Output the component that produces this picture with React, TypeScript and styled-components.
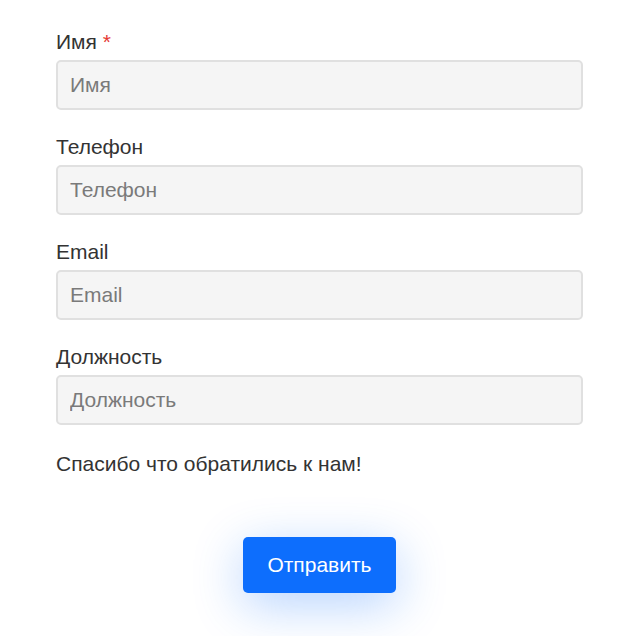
import React from "react";
import styled, { createGlobalStyle } from "styled-components";

const Global = createGlobalStyle`
    body {
        margin: 0;
        background: #ffffff;
        font-family: "Liberation Sans", Arial, sans-serif;
        color: #333333;
    }
`;

const Form = styled.form`
    width: 527px;
    margin: 0 auto;
    padding: 30px 0 50px;
    display: flex;
    flex-direction: column;
`;

const Field = styled.div`
    display: flex;
    flex-direction: column;
    margin-bottom: 25px;
`;

const Label = styled.label`
    font-size: 21px;
    line-height: 24px;
    margin-bottom: 6px;
    color: #333;
`;

const Star = styled.span`
    color: #e53935;
`;

const Input = styled.input`
    box-sizing: border-box;
    height: 50px;
    width: 100%;
    padding: 0 12px;
    font-family: "Liberation Sans", Arial, sans-serif;
    font-size: 21px;
    background: #f5f5f5;
    border: 2px solid #e0e0e0;
    border-radius: 5px;
    outline: none;
    &::placeholder {
        color: #7a7a7a;
    }
`;

const Thanks = styled.p`
    margin: 2px 0 0;
    font-size: 21px;
    line-height: 24px;
`;

const Actions = styled.div`
    display: flex;
    justify-content: center;
    margin-top: 61px;
`;

const Button = styled.button`
    width: 153px;
    height: 56px;
    border: none;
    border-radius: 5px;
    background: #0d6efd;
    color: #ffffff;
    font-family: "Liberation Sans", Arial, sans-serif;
    font-size: 21px;
    box-shadow: 0 12px 50px rgba(13, 110, 253, 0.3);
`;

const fields = [
    { name: "Имя", required: true },
    { name: "Телефон" },
    { name: "Email" },
    { name: "Должность" },
];

const App = () => {
    return (
        <>
            <Global />
            <Form onSubmit={(e) => e.preventDefault()}>
                {fields.map((f) => (
                    <Field key={f.name}>
                        <Label>
                            {f.name} {f.required && <Star>*</Star>}
                        </Label>
                        <Input placeholder={f.name} />
                    </Field>
                ))}
                <Thanks>Спасибо что обратились к нам!</Thanks>
                <Actions>
                    <Button type="submit">Отправить</Button>
                </Actions>
            </Form>
        </>
    );
};

export default App;
